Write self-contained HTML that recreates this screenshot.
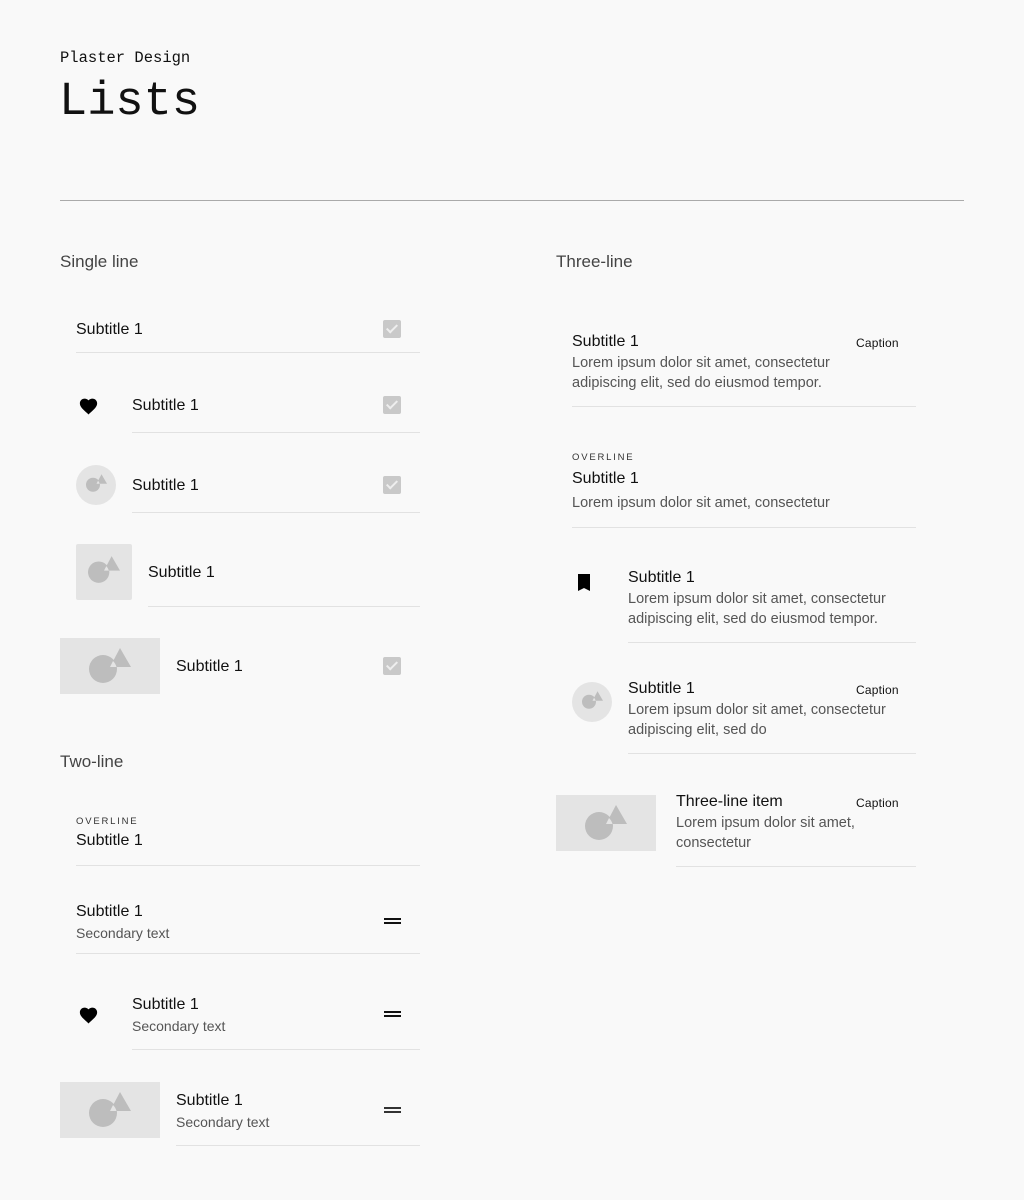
<!DOCTYPE html>
<html><head><meta charset="utf-8"><style>
body{margin:0;background:#f9f9f9;width:1024px;height:1200px;position:relative;font-family:"Liberation Sans",sans-serif;color:#111;overflow:hidden}
.a{position:absolute;white-space:nowrap}
.s{font-size:16px;line-height:20px;color:#111;margin-top:2px}
.b{font-size:14.5px;line-height:20px;color:#555;margin-top:1px}
.sec{font-size:14px;line-height:18px;color:#555;margin-top:1px}
.cap{font-size:12px;line-height:16px;color:#111;letter-spacing:0.2px}
.ov{font-size:9.5px;letter-spacing:1.8px;color:#333;line-height:12px;margin-top:1px}
.h{font-size:17px;color:#444;line-height:20px;margin-top:1px}
.d{position:absolute;height:1px;background:#e2e2e2}
.cb{position:absolute;width:18px;height:18px;background:#c9c9c9;border-radius:2px}
.cb:after{content:"";position:absolute;left:6px;top:2px;width:4px;height:9px;border:solid #eee;border-width:0 2px 2px 0;transform:rotate(45deg)}
.eq{position:absolute;width:17px;height:6px;border-top:2px solid #111;border-bottom:2px solid #111;box-sizing:border-box}
.ph{position:absolute;background:#e4e4e4}
</style></head><body>
<div class="a" style="left:60px;top:48px;font-family:'Liberation Mono',monospace;font-size:15.5px;line-height:20px">Plaster Design</div>
<div class="a" style="left:59px;top:75px;font-family:'Liberation Mono',monospace;font-size:47px;line-height:56px">Lists</div>
<div class="d" style="left:60px;top:200px;width:904px;background:#aaa"></div>

<div class="a h" style="left:60px;top:251px">Single line</div>
<div class="a s" style="left:76px;top:318px">Subtitle 1</div><div class="cb" style="left:383px;top:320px"></div>
<div class="d" style="left:76px;top:352px;width:344px"></div>

<svg class="a" style="left:78px;top:396px" width="21" height="19" viewBox="0 0 24 22"><path d="M12 21.4 10.6 20C5.4 15.4 2 12.3 2 8.5 2 5.4 4.4 3 7.5 3c1.7 0 3.4.8 4.5 2.1C13.1 3.8 14.8 3 16.5 3 19.6 3 22 5.4 22 8.5c0 3.8-3.4 6.9-8.6 11.5z" fill="#000"/></svg>
<div class="a s" style="left:132px;top:394px">Subtitle 1</div><div class="cb" style="left:383px;top:396px"></div>
<div class="d" style="left:132px;top:432px;width:288px"></div>

<div class="ph" style="left:76px;top:465px;width:40px;height:40px;border-radius:50%"></div>
<svg class="a" style="left:86px;top:474px" width="21" height="18" viewBox="29 10 42 35"><circle cx="43" cy="31" r="14" fill="#bdbdbd"/><path d="M60 10 50 29h21z" fill="#bdbdbd"/><path d="M53 23 50 29h6.5a14 14 0 0 0-3.5-6z" fill="#e4e4e4"/></svg>
<div class="a s" style="left:132px;top:474px">Subtitle 1</div><div class="cb" style="left:383px;top:476px"></div>
<div class="d" style="left:132px;top:512px;width:288px"></div>

<div class="ph" style="left:76px;top:544px;width:56px;height:56px;border-radius:2px"></div>
<svg class="a" style="left:88px;top:556px" width="32" height="27" viewBox="29 10 42 35"><circle cx="43" cy="31" r="14" fill="#bdbdbd"/><path d="M60 10 50 29h21z" fill="#bdbdbd"/><path d="M53 23 50 29h6.5a14 14 0 0 0-3.5-6z" fill="#e4e4e4"/></svg>
<div class="a s" style="left:148px;top:561px">Subtitle 1</div>
<div class="d" style="left:148px;top:606px;width:272px"></div>

<div class="ph" style="left:60px;top:638px;width:100px;height:56px"></div>
<svg class="a" style="left:89px;top:648px" width="42" height="35" viewBox="29 10 42 35"><circle cx="43" cy="31" r="14" fill="#bdbdbd"/><path d="M60 10 50 29h21z" fill="#bdbdbd"/><path d="M53 23 50 29h6.5a14 14 0 0 0-3.5-6z" fill="#e4e4e4"/></svg>
<div class="a s" style="left:176px;top:655px">Subtitle 1</div><div class="cb" style="left:383px;top:657px"></div>

<div class="a h" style="left:60px;top:751px">Two-line</div>
<div class="a ov" style="left:76px;top:815px">OVERLINE</div>
<div class="a s" style="left:76px;top:829px">Subtitle 1</div>
<div class="d" style="left:76px;top:865px;width:344px"></div>

<div class="a s" style="left:76px;top:900px">Subtitle 1</div>
<div class="a sec" style="left:76px;top:923px">Secondary text</div>
<div class="eq" style="left:384px;top:918px"></div>
<div class="d" style="left:76px;top:953px;width:344px"></div>

<svg class="a" style="left:78px;top:1005px" width="21" height="19" viewBox="0 0 24 22"><path d="M12 21.4 10.6 20C5.4 15.4 2 12.3 2 8.5 2 5.4 4.4 3 7.5 3c1.7 0 3.4.8 4.5 2.1C13.1 3.8 14.8 3 16.5 3 19.6 3 22 5.4 22 8.5c0 3.8-3.4 6.9-8.6 11.5z" fill="#000"/></svg>
<div class="a s" style="left:132px;top:993px">Subtitle 1</div>
<div class="a sec" style="left:132px;top:1016px">Secondary text</div>
<div class="eq" style="left:384px;top:1011px"></div>
<div class="d" style="left:132px;top:1049px;width:288px"></div>

<div class="ph" style="left:60px;top:1082px;width:100px;height:56px"></div>
<svg class="a" style="left:89px;top:1092px" width="42" height="35" viewBox="29 10 42 35"><circle cx="43" cy="31" r="14" fill="#bdbdbd"/><path d="M60 10 50 29h21z" fill="#bdbdbd"/><path d="M53 23 50 29h6.5a14 14 0 0 0-3.5-6z" fill="#e4e4e4"/></svg>
<div class="a s" style="left:176px;top:1089px">Subtitle 1</div>
<div class="a sec" style="left:176px;top:1112px">Secondary text</div>
<div class="eq" style="left:384px;top:1107px;border-color:#333"></div>
<div class="d" style="left:176px;top:1145px;width:244px"></div>

<div class="a h" style="left:556px;top:251px">Three-line</div>
<div class="a s" style="left:572px;top:330px">Subtitle 1</div>
<div class="a cap" style="left:856px;top:335px">Caption</div>
<div class="a b" style="left:572px;top:352px">Lorem ipsum dolor sit amet, consectetur<br>adipiscing elit, sed do eiusmod tempor.</div>
<div class="d" style="left:572px;top:406px;width:344px"></div>

<div class="a ov" style="left:572px;top:451px">OVERLINE</div>
<div class="a s" style="left:572px;top:467px">Subtitle 1</div>
<div class="a b" style="left:572px;top:492px">Lorem ipsum dolor sit amet, consectetur</div>
<div class="d" style="left:572px;top:527px;width:344px"></div>

<svg class="a" style="left:577px;top:573px" width="14" height="19" viewBox="0 0 14 19"><path d="M1 1h12v17l-6-3-6 3z" fill="#000"/></svg>
<div class="a s" style="left:628px;top:566px">Subtitle 1</div>
<div class="a b" style="left:628px;top:588px">Lorem ipsum dolor sit amet, consectetur<br>adipiscing elit, sed do eiusmod tempor.</div>
<div class="d" style="left:628px;top:642px;width:288px"></div>

<div class="ph" style="left:572px;top:682px;width:40px;height:40px;border-radius:50%"></div>
<svg class="a" style="left:582px;top:691px" width="21" height="18" viewBox="29 10 42 35"><circle cx="43" cy="31" r="14" fill="#bdbdbd"/><path d="M60 10 50 29h21z" fill="#bdbdbd"/><path d="M53 23 50 29h6.5a14 14 0 0 0-3.5-6z" fill="#e4e4e4"/></svg>
<div class="a s" style="left:628px;top:677px">Subtitle 1</div>
<div class="a cap" style="left:856px;top:682px">Caption</div>
<div class="a b" style="left:628px;top:699px">Lorem ipsum dolor sit amet, consectetur<br>adipiscing elit, sed do</div>
<div class="d" style="left:628px;top:753px;width:288px"></div>

<div class="ph" style="left:556px;top:795px;width:100px;height:56px"></div>
<svg class="a" style="left:585px;top:805px" width="42" height="35" viewBox="29 10 42 35"><circle cx="43" cy="31" r="14" fill="#bdbdbd"/><path d="M60 10 50 29h21z" fill="#bdbdbd"/><path d="M53 23 50 29h6.5a14 14 0 0 0-3.5-6z" fill="#e4e4e4"/></svg>
<div class="a s" style="left:676px;top:790px">Three-line item</div>
<div class="a cap" style="left:856px;top:795px">Caption</div>
<div class="a b" style="left:676px;top:812px">Lorem ipsum dolor sit amet,<br>consectetur</div>
<div class="d" style="left:676px;top:866px;width:240px"></div>
</body></html>
